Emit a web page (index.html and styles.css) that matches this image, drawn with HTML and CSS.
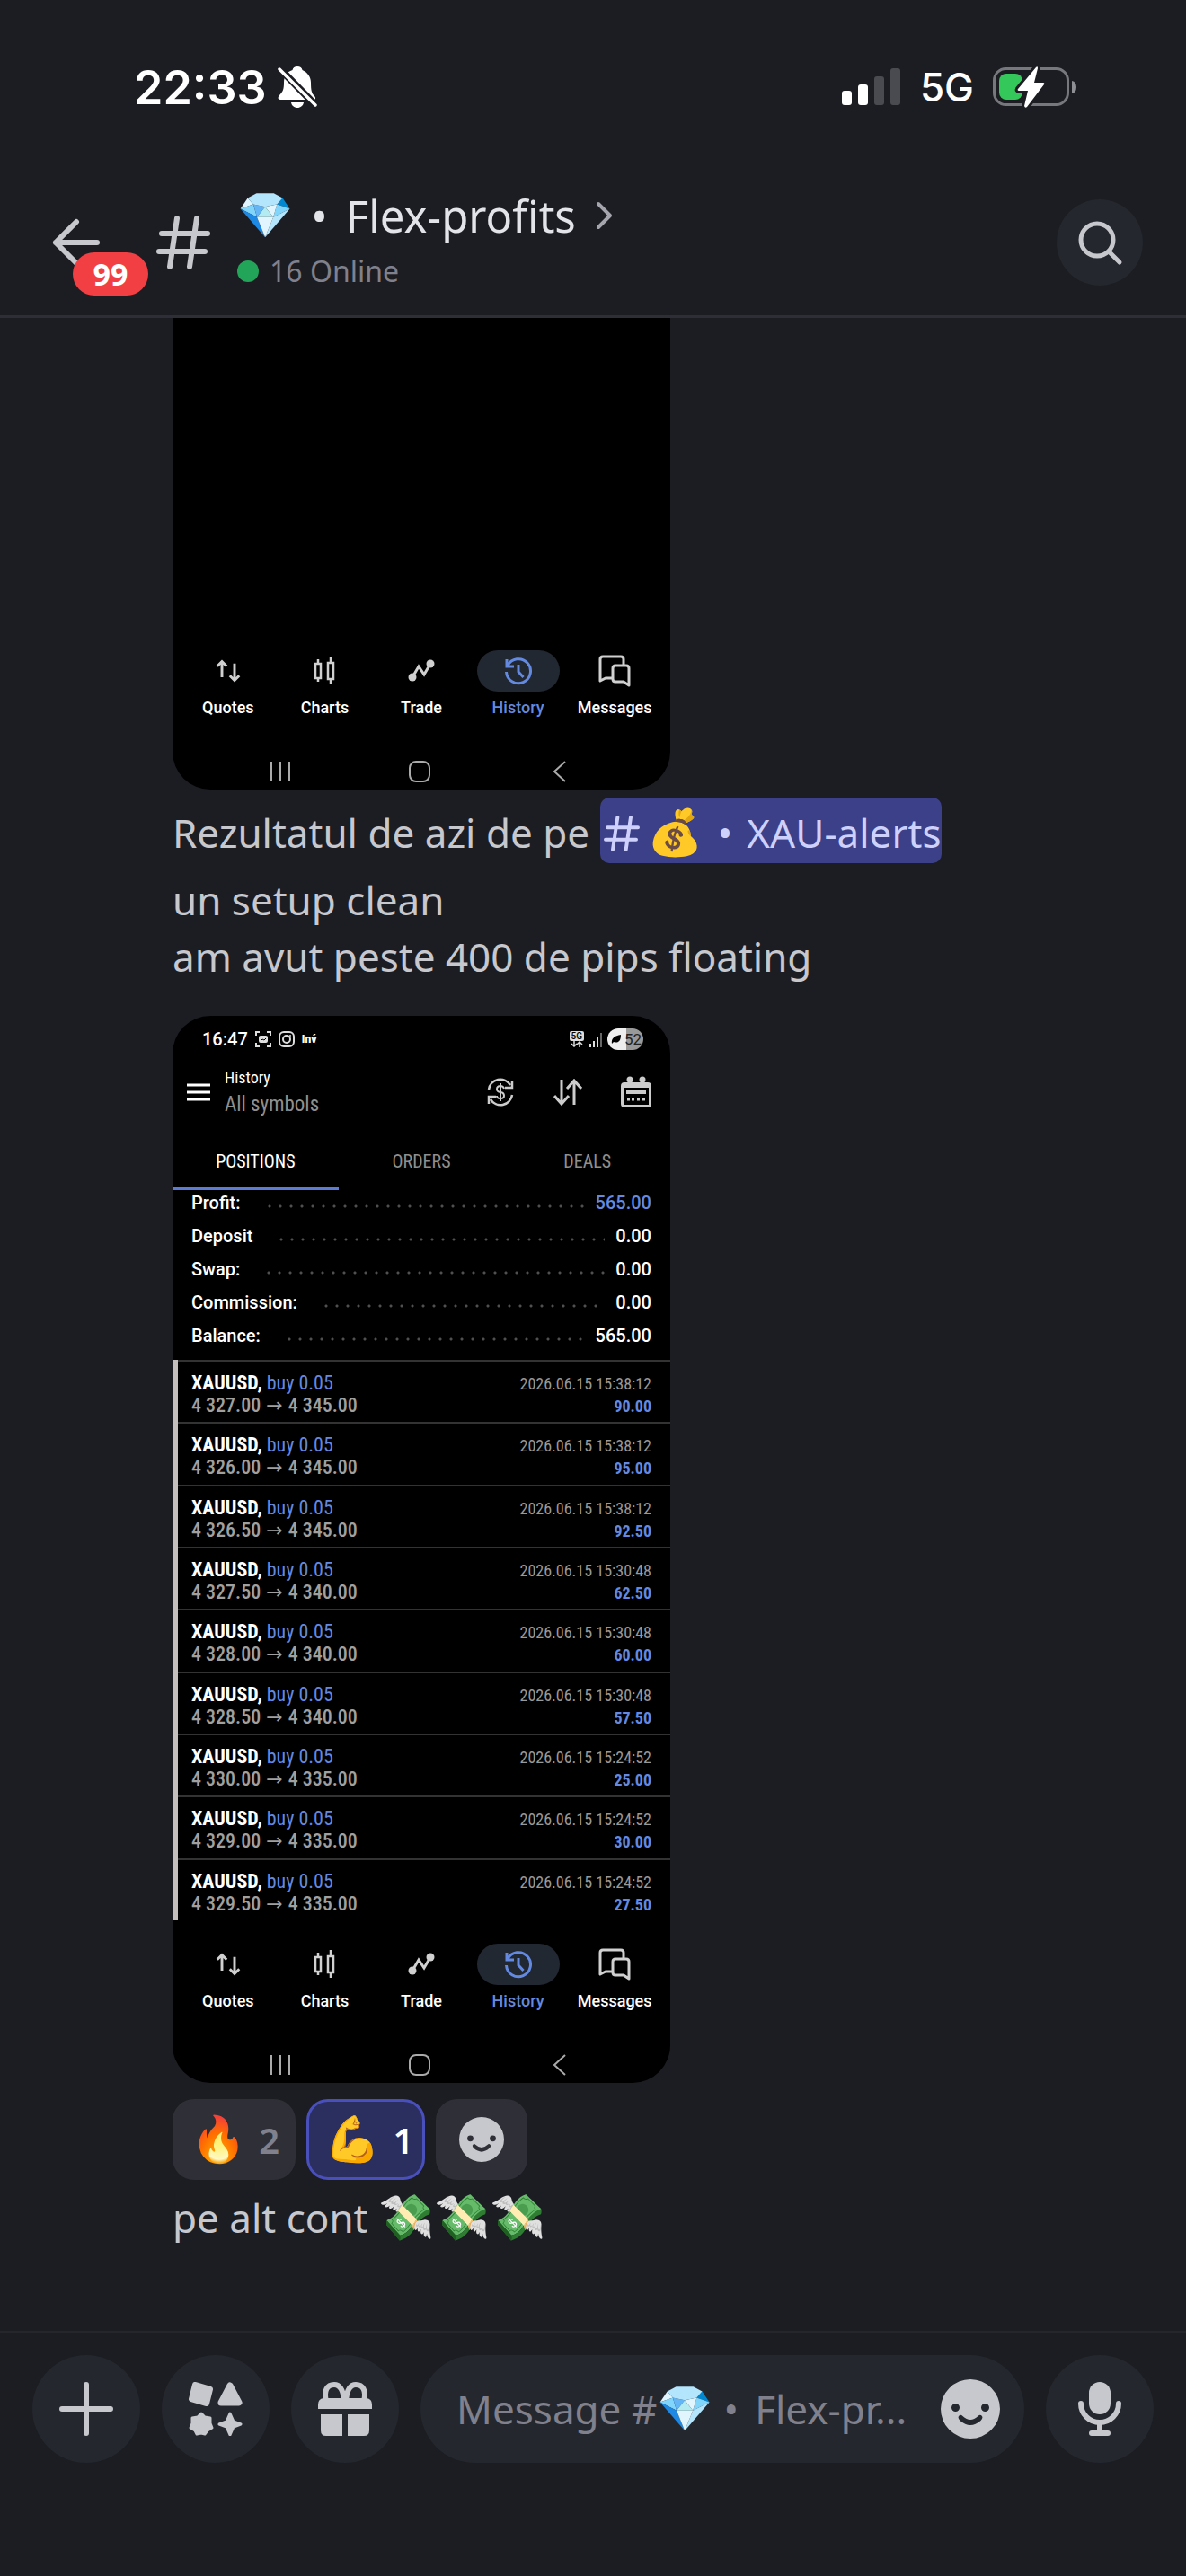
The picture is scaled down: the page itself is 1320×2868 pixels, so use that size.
FILE: index.html
```html
<!DOCTYPE html>
<html lang="ro">

<head>
  <meta charset="UTF-8">
  <meta name="viewport" content="width=device-width, initial-scale=1.0">
  <title>Flex-profits</title>
  <link rel="stylesheet" href="styles.css">
</head>

<body>
  <!-- shared icons -->
  <svg class="sprite" aria-hidden="true">
    <symbol id="i-hash" viewBox="0 0 60 60">
      <path d="M23 3 15 57M45 3 37 57M6 20H57M3 40H54" fill="none" stroke="currentColor" stroke-width="6" stroke-linecap="round" />
    </symbol>
    <symbol id="i-smile" viewBox="0 0 66 66">
      <path fill="currentColor" fill-rule="evenodd" d="M33 0a33 33 0 1 0 0 66a33 33 0 0 0 0-66zM16.500 27a4.500 4.500 0 1 1 0 9a4.500 4.500 0 0 1 0-9zM49.500 27a4.500 4.500 0 1 1 0 9a4.500 4.500 0 0 1 0-9zM19.500 42q2-4 5-1q8.500 8 17 0q3-3 5 1q0 2-2 4q-11.500 10-23 0q-2-2-2-4z" />
    </symbol>
    <symbol id="i-quotes" viewBox="0 0 24 24">
      <path d="M6 18V3M1.500 7.500 6 3l4.500 4.500M18 5v16M13.500 16.500 18 21l4.500-4.500" fill="none" stroke="currentColor" stroke-width="2.500" />
    </symbol>
    <symbol id="i-charts" viewBox="0 0 26 32">
      <path d="M6 3v5M6 24v4M20 0v7M20 25v6M3 8h6v16H3zM17 7h6v18h-6z" fill="none" stroke="currentColor" stroke-width="2.500" />
    </symbol>
    <symbol id="i-trade" viewBox="0 0 30 26">
      <path d="m5 20 7-12 6 9 7-12" fill="none" stroke="currentColor" stroke-width="3" />
      <circle cx="5" cy="20" r="4.500" fill="currentColor" />
      <circle cx="25" cy="5" r="4.500" fill="currentColor" />
    </symbol>
    <symbol id="i-history" viewBox="0 0 32 32">
      <path d="M4 10a13.500 13.500 0 1 1-1.500 7M3 3v8h8M16 9v8l5.500 6" fill="none" stroke="currentColor" stroke-width="3" />
    </symbol>
    <symbol id="i-messages" viewBox="0 0 36 36">
      <path d="M16 26H8l-6 3V5q0-3 3-3h20q3 0 3 3v6M19 12h12q3 0 3 3v19l-6-4h-9q-3 0-3-3V15q0-3 3-3z" fill="none" stroke="currentColor" stroke-width="3" stroke-linejoin="round" />
    </symbol>
  </svg>

  <header class="top">
    <div class="status-bar">
      <div class="status-left">
        <span>22:33</span>
        <svg width="44" height="46" viewBox="0 0 44 46">
          <path fill="#fff" d="M22 0c3 0 5 1.500 5.500 4C34 7 37 12 37 18c0 9 1 12 4 15 2 2 1 4-1 4H3c-3 0-3-3-1-5 4-4 5-7 5-14C7 11 10 6 16.500 4 17 1.500 19 0 22 0zM15 40h14c-.5 3.500-3.500 6-7 6s-6.500-2.500-7-6z" />
          <path d="M3 3 42 43" stroke="#1c1d22" stroke-width="8" />
          <path d="M2 3 42 43" stroke="#fff" stroke-width="3.500" stroke-linecap="round" />
        </svg>
      </div>
      <div class="status-right">
        <svg width="66" height="42" viewBox="0 0 66 42">
          <rect x="0" y="25" width="11" height="16" rx="3" fill="#fff" />
          <rect x="18" y="18" width="11" height="23" rx="3" fill="#fff" />
          <rect x="36" y="9" width="11" height="32" rx="3" fill="#4a4b50" />
          <rect x="54" y="0" width="11" height="41" rx="3" fill="#4a4b50" />
        </svg>
        <span class="network">5G</span>
        <svg width="94" height="46" viewBox="0 0 94 46">
          <rect x="1.500" y="2.500" width="82" height="40" rx="13" fill="none" stroke="#77787d" stroke-width="3" />
          <path d="M88 16q5 1 5 7t-5 7z" fill="#8e8f94" />
          <rect x="7" y="8" width="26" height="29" rx="8" fill="#34c759" />
          <path d="M48 1 28 25q-1 2 1 2h10l-4 17q1 3 3 1l19-25q1-2-1-2H46l4-16q0-3-2-1z" fill="#fff" stroke="#1c1d22" stroke-width="6" paint-order="stroke" />
        </svg>
      </div>
    </div>

    <div class="channel-bar">
      <button class="back" aria-label="Back">
        <svg width="54" height="54" viewBox="0 0 54 54">
          <path d="M27 4 4 27l23 23M4 27h46" fill="none" stroke="#c7c8ce" stroke-width="6" stroke-linecap="round" stroke-linejoin="round" />
        </svg>
        <span class="badge">99</span>
      </button>
      <svg class="channel-hash" width="60" height="60"><use href="#i-hash" /></svg>
      <div class="channel-info">
        <h1>
          <span class="emoji">💎</span><span class="dot">•</span>Flex-profits
          <svg width="20" height="32" viewBox="0 0 20 32">
            <path d="m3 3 13 13L3 29" fill="none" stroke="#a5a6ad" stroke-width="4" stroke-linecap="round" stroke-linejoin="round" />
          </svg>
        </h1>
        <p><span class="online"></span>16 Online</p>
      </div>
      <button class="round search" aria-label="Search">
        <svg width="52" height="52" viewBox="0 0 52 52">
          <circle cx="23" cy="23" r="18" fill="none" stroke="#c7c8ce" stroke-width="5" />
          <path d="m36 36 12 12" stroke="#c7c8ce" stroke-width="5" stroke-linecap="round" />
        </svg>
      </button>
    </div>
  </header>

  <main class="messages">
    <section class="shot shot-tall">
      <nav class="app-nav">
        <a href="#"><span><svg width="28" height="28"><use href="#i-quotes" /></svg></span>Quotes</a>
        <a href="#"><span><svg width="26" height="32"><use href="#i-charts" /></svg></span>Charts</a>
        <a href="#"><span><svg width="30" height="26"><use href="#i-trade" /></svg></span>Trade</a>
        <a href="#" class="active"><span><svg width="32" height="32"><use href="#i-history" /></svg></span>History</a>
        <a href="#"><span><svg width="36" height="36"><use href="#i-messages" /></svg></span>Messages</a>
      </nav>
      <svg class="sys-nav" viewBox="0 0 554 40">
        <path d="M110 9v22M120 9v22M130 9v22M437 9 425 20l12 11" fill="none" stroke="#aaa" stroke-width="2" />
        <rect x="264" y="9" width="22" height="22" rx="7" fill="none" stroke="#aaa" stroke-width="2" />
      </svg>
    </section>

    <p class="message with-mention">Rezultatul de azi de pe <a href="#" class="mention"><svg width="40" height="40"><use href="#i-hash" /></svg><span class="emoji">💰</span><span class="dot">•</span>XAU-alerts</a></p>
    <p class="message">un setup clean<br>am avut peste 400 de pips floating</p>

    <section class="shot shot-history">
      <div class="phone-status">
        <b>16:47</b>
        <svg width="18" height="18" viewBox="0 0 18 18">
          <path d="M1 5V1h4M13 1h4v4M17 13v4h-4M5 17H1v-4" fill="none" stroke="#ddd" stroke-width="2" />
          <rect x="4" y="5" width="10" height="8" rx="2" fill="#ddd" />
          <path d="m6 11 2-2 2 1 2-2" stroke="#000" fill="none" />
        </svg>
        <svg width="18" height="18" viewBox="0 0 18 18">
          <rect x="1" y="1" width="16" height="16" rx="5" fill="none" stroke="#ddd" stroke-width="2" />
          <circle cx="9" cy="9" r="4" fill="none" stroke="#ddd" stroke-width="2" />
          <circle cx="13" cy="5" r="1" fill="#ddd" />
        </svg>
        <b class="inv">Inv́</b>
        <span class="phone-right">
          <span class="five-g"><b>5G</b>
            <svg width="14" height="7" viewBox="0 0 14 7"><path d="M4 0v6M1 3l3 3 3-3M10 7V1M7 4l3-3 3 3" fill="none" stroke="#ddd" stroke-width="1.500" /></svg>
          </span>
          <svg width="14" height="18" viewBox="0 0 14 18">
            <path d="M1 14v4M5 11v7M9 6v12" stroke="#ddd" stroke-width="2" />
            <path d="M13 2v16" stroke="#666" stroke-width="2" />
          </svg>
          <span class="phone-battery">
            <svg width="12" height="12" viewBox="0 0 12 12"><path d="M1 11c-1-6 3-9 10-10 0 7-3 10-8 8z" fill="#000" /></svg>52
          </span>
        </span>
      </div>

      <div class="app-bar">
        <button aria-label="Menu">
          <svg width="26" height="20" viewBox="0 0 26 20"><path d="M0 2h26M0 10h26M0 18h26" stroke="#fff" stroke-width="3" /></svg>
        </button>
        <div class="app-title">
          <h2>History</h2>
          <p>All symbols</p>
        </div>
        <button aria-label="Currency">
          <svg width="32" height="32" viewBox="0 0 32 32">
            <path d="M3 13A13 13 0 0 1 27 8M29 19A13 13 0 0 1 5 24M29 3v8h-8M3 29v-8h8" fill="none" stroke="#ccc" stroke-width="2.500" />
            <path d="M20 12q-1-3-4-3-4 0-4 3.500 0 3 4 3.500t4 4q0 3-4 3t-4-3M16 6v20" fill="none" stroke="#ccc" stroke-width="2" />
          </svg>
        </button>
        <button aria-label="Sort">
          <svg width="32" height="32" viewBox="0 0 32 32"><path d="M9 2v27M1 20l8 9 8-9M23 30V3M15 12l8-9 8 9" fill="none" stroke="#ccc" stroke-width="3" /></svg>
        </button>
        <button aria-label="Calendar">
          <svg width="34" height="36" viewBox="0 0 34 36">
            <circle cx="10" cy="4" r="3.500" fill="#ccc" />
            <circle cx="24" cy="4" r="3.500" fill="#ccc" />
            <path d="M4 7h26q4 0 4 4v20q0 4-4 4H4q-4 0-4-4V11q0-4 4-4zM3 13v19h28V13z" fill="#ccc" fill-rule="evenodd" />
            <path d="M6 18h22" stroke="#ccc" stroke-width="4" />
            <path d="M7 26h3M12 26h3M18 26h3M24 26h3" stroke="#ccc" stroke-width="3" />
          </svg>
        </button>
      </div>

      <div class="tabs">
        <button class="selected">POSITIONS</button>
        <button>ORDERS</button>
        <button>DEALS</button>
      </div>

      <dl class="summary">
        <div><dt>Profit:</dt><dd class="gain">565.00</dd></div>
        <div><dt>Deposit</dt><dd>0.00</dd></div>
        <div><dt>Swap:</dt><dd>0.00</dd></div>
        <div><dt>Commission:</dt><dd>0.00</dd></div>
        <div><dt>Balance:</dt><dd>565.00</dd></div>
      </dl>

      <ul class="deals">
        <li>
          <p><b>XAUUSD,</b><span>buy 0.05</span><time>2026.06.15 15:38:12</time></p>
          <p class="price">4 327.00<i>→</i>4 345.00<em>90.00</em></p>
        </li>
        <li>
          <p><b>XAUUSD,</b><span>buy 0.05</span><time>2026.06.15 15:38:12</time></p>
          <p class="price">4 326.00<i>→</i>4 345.00<em>95.00</em></p>
        </li>
        <li>
          <p><b>XAUUSD,</b><span>buy 0.05</span><time>2026.06.15 15:38:12</time></p>
          <p class="price">4 326.50<i>→</i>4 345.00<em>92.50</em></p>
        </li>
        <li>
          <p><b>XAUUSD,</b><span>buy 0.05</span><time>2026.06.15 15:30:48</time></p>
          <p class="price">4 327.50<i>→</i>4 340.00<em>62.50</em></p>
        </li>
        <li>
          <p><b>XAUUSD,</b><span>buy 0.05</span><time>2026.06.15 15:30:48</time></p>
          <p class="price">4 328.00<i>→</i>4 340.00<em>60.00</em></p>
        </li>
        <li>
          <p><b>XAUUSD,</b><span>buy 0.05</span><time>2026.06.15 15:30:48</time></p>
          <p class="price">4 328.50<i>→</i>4 340.00<em>57.50</em></p>
        </li>
        <li>
          <p><b>XAUUSD,</b><span>buy 0.05</span><time>2026.06.15 15:24:52</time></p>
          <p class="price">4 330.00<i>→</i>4 335.00<em>25.00</em></p>
        </li>
        <li>
          <p><b>XAUUSD,</b><span>buy 0.05</span><time>2026.06.15 15:24:52</time></p>
          <p class="price">4 329.00<i>→</i>4 335.00<em>30.00</em></p>
        </li>
        <li>
          <p><b>XAUUSD,</b><span>buy 0.05</span><time>2026.06.15 15:24:52</time></p>
          <p class="price">4 329.50<i>→</i>4 335.00<em>27.50</em></p>
        </li>
      </ul>

      <nav class="app-nav">
        <a href="#"><span><svg width="28" height="28"><use href="#i-quotes" /></svg></span>Quotes</a>
        <a href="#"><span><svg width="26" height="32"><use href="#i-charts" /></svg></span>Charts</a>
        <a href="#"><span><svg width="30" height="26"><use href="#i-trade" /></svg></span>Trade</a>
        <a href="#" class="active"><span><svg width="32" height="32"><use href="#i-history" /></svg></span>History</a>
        <a href="#"><span><svg width="36" height="36"><use href="#i-messages" /></svg></span>Messages</a>
      </nav>
      <svg class="sys-nav" viewBox="0 0 554 40">
        <path d="M110 9v22M120 9v22M130 9v22M437 9 425 20l12 11" fill="none" stroke="#aaa" stroke-width="2" />
        <rect x="264" y="9" width="22" height="22" rx="7" fill="none" stroke="#aaa" stroke-width="2" />
      </svg>
    </section>

    <div class="reactions">
      <button><span class="emoji">🔥</span>2</button>
      <button class="mine"><span class="emoji">💪</span>1</button>
      <button aria-label="Add reaction"><svg width="50" height="50"><use href="#i-smile" /></svg></button>
    </div>
    <p class="message last">pe alt cont <span class="emoji">💸💸💸</span></p>
  </main>

  <footer class="composer">
    <button class="round" aria-label="Add">
      <svg width="60" height="60" viewBox="0 0 60 60"><path d="M30 3v54M3 30h54" stroke="currentColor" stroke-width="6" stroke-linecap="round" /></svg>
    </button>
    <button class="round" aria-label="Apps">
      <svg width="60" height="60" viewBox="0 0 60 60" fill="currentColor" stroke="currentColor" stroke-linejoin="round">
        <path d="m7 3 17 5-4 16-17-5z" stroke-width="6" />
        <path d="m46 4 10 19H36z" stroke-width="7" />
        <path d="m14 35 4 4 6 1v6l2 5-5 3-3 4-4-1-5 1-2-4-5-3 2-5v-6l6-1z" stroke-width="3" />
        <path d="m46 35 4 9 8 3-8 3-4 9-4-9-8-3 8-3z" stroke-width="3" />
      </svg>
    </button>
    <button class="round" aria-label="Gift">
      <svg width="60" height="60" viewBox="0 0 60 60">
        <path d="M9 21C6 10 10 3 18 3c6 0 10 6 11 18M51 21c3-11-1-18-9-18-6 0-10 6-11 18" fill="none" stroke="currentColor" stroke-width="6" />
        <path d="M6 18h48q6 1 6 7v5H0v-5q0-6 6-7zM3 36h24v24H9q-6 0-6-6zM33 36h24v18q0 6-6 6H33z" fill="currentColor" />
      </svg>
    </button>
    <div class="field">
      <input type="text" id="message" placeholder=" ">
      <label for="message">Message #<span class="emoji">💎</span><span class="dot">•</span>Flex-pr...</label>
      <button aria-label="Emoji"><svg width="66" height="66"><use href="#i-smile" /></svg></button>
    </div>
    <button class="round" aria-label="Voice message">
      <svg width="60" height="60" viewBox="0 0 60 60">
        <rect x="18" y="0" width="24" height="36" rx="12" fill="currentColor" />
        <path d="M9 24a21 21 0 0 0 42 0M30 45v12M21 57h18" fill="none" stroke="currentColor" stroke-width="6" stroke-linecap="round" />
      </svg>
    </button>
  </footer>
</body>

</html>
```
FILE: styles.css
```css
* {
  margin: 0;
  padding: 0;
  box-sizing: border-box;
}

body {
  display: flex;
  flex-direction: column;
  height: 100vh;
  overflow: hidden;
  background-color: #1c1d22;
  color: #c7c8ce;
  font-family: "Noto Sans", sans-serif;
  font-size: 44px;
}

svg {
  display: block;
  flex-shrink: 0;
}

button {
  border: none;
  background: none;
  color: inherit;
  font: inherit;
  cursor: pointer;
}

a {
  color: inherit;
  text-decoration: none;
}

.sprite {
  position: absolute;
  width: 0;
  height: 0;
}

.emoji {
  font-family: "Noto Color Emoji", sans-serif;
  font-size: 50px;
  line-height: 1;
}

/* header */
.top {
  border-bottom: 3px solid #2e2f36;
}

.status-bar {
  display: flex;
  align-items: center;
  justify-content: space-between;
  height: 194px;
  padding: 0 121px 0 149px;
  color: #fff;
  font-family: Inter, sans-serif;
  font-size: 52px;
  font-weight: 600;
}

.status-left,
.status-right {
  display: flex;
  align-items: center;
  gap: 12px;
}

.status-right {
  gap: 21px;
}

.network {
  font-size: 44px;
  font-weight: 500;
}

.channel-bar {
  display: flex;
  align-items: center;
  height: 157px;
  padding: 0 48px 6px 58px;
}

.back {
  position: relative;
}

.badge {
  position: absolute;
  left: 23px;
  top: 38px;
  width: 84px;
  height: 48px;
  border-radius: 24px;
  background-color: #f23f43;
  color: #fff;
  font-size: 34px;
  font-weight: 700;
  line-height: 48px;
}

.channel-hash {
  margin: 0 30px 0 62px;
}

.channel-info {
  flex: 1;
}

.channel-info h1 {
  display: flex;
  align-items: center;
  color: #e3e4e9;
  font-size: 49px;
  font-weight: 400;
  line-height: 60px;
  white-space: nowrap;
}

.channel-info h1 svg {
  margin-left: 22px;
}

.dot {
  margin: 0 20px;
}

.channel-info p {
  display: flex;
  align-items: center;
  gap: 12px;
  margin-top: 4px;
  color: #80818c;
  font-size: 32px;
  line-height: 56px;
}

.online {
  width: 24px;
  height: 24px;
  border-radius: 50%;
  background-color: #23a559;
}

.round {
  display: flex;
  align-items: center;
  justify-content: center;
  flex-shrink: 0;
  width: 120px;
  height: 120px;
  border-radius: 50%;
  background-color: #24272e;
}

.round.search {
  width: 96px;
  height: 96px;
}

/* messages */
.messages {
  display: flex;
  flex: 1;
  flex-direction: column;
  justify-content: flex-end;
  min-height: 0;
  overflow: hidden;
  padding: 0 48px 94px 192px;
}

.message {
  flex-shrink: 0;
  line-height: 63px;
}

.message.last {
  height: 63px;
}

.with-mention {
  display: flex;
  align-items: baseline;
  margin: 9px 0 10px;
  white-space: pre;
}

.mention {
  display: flex;
  align-items: baseline;
  padding: 8px 0 2px 4px;
  border-radius: 10px;
  background-color: #3c4088;
  color: #cdd1fc;
}

.mention svg {
  align-self: center;
}

.mention .emoji {
  margin-left: 9px;
}

.mention .dot {
  margin: 0 16px;
}

/* phone screenshots */
.shot {
  display: flex;
  flex-direction: column;
  flex-shrink: 0;
  width: 554px;
  border-radius: 42px;
  background-color: #000;
  color: #fff;
  font-family: Roboto, sans-serif;
  font-size: 20px;
  overflow: hidden;
}

.shot-tall {
  justify-content: flex-end;
  min-height: 600px;
}

.shot-history {
  margin: 34px 0 18px;
}

.app-nav {
  display: flex;
  padding: 0 8px;
}

.app-nav a {
  display: flex;
  flex: 1;
  flex-direction: column;
  align-items: center;
  font-size: 18px;
  font-weight: 500;
  line-height: 36px;
}

.app-nav span {
  display: flex;
  align-items: center;
  justify-content: center;
  width: 92px;
  height: 46px;
  border-radius: 23px;
  color: #d0d0d0;
}

.app-nav .active,
.app-nav .active span {
  color: #6389e0;
}

.app-nav .active span {
  background-color: #222831;
}

.sys-nav {
  width: 100%;
  height: 40px;
  margin-top: 33px;
}

.phone-status {
  display: flex;
  align-items: center;
  gap: 8px;
  height: 52px;
  padding: 0 30px 0 33px;
}

.phone-status b {
  font-size: 20px;
  font-weight: 500;
}

.phone-status .inv {
  font-size: 12px;
  font-weight: 900;
}

.phone-right {
  display: flex;
  align-items: center;
  gap: 6px;
  margin-left: auto;
}

.five-g {
  display: flex;
  flex-direction: column;
  align-items: center;
}

.phone-status .five-g b {
  padding: 0 2px;
  border-radius: 2px;
  background-color: #ddd;
  color: #000;
  font-size: 10px;
  line-height: 11px;
}

.phone-battery {
  display: flex;
  align-items: center;
  gap: 3px;
  width: 40px;
  height: 24px;
  padding-left: 4px;
  border-radius: 12px;
  background: linear-gradient(90deg, #eee 52%, #999 52%);
  color: #222;
  font-size: 17px;
}

.app-bar {
  display: flex;
  align-items: center;
  gap: 43px;
  height: 66px;
  padding: 0 21px 0 16px;
}

.app-title {
  flex: 1;
  margin-left: -27px;
  font-family: "Roboto Condensed", Roboto, sans-serif;
}

.app-title h2 {
  font-size: 18px;
  font-weight: 400;
  line-height: 28px;
}

.app-title p {
  color: #8f8f8f;
  font-size: 23px;
  line-height: 32px;
}

.tabs {
  display: flex;
  margin-top: 16px;
}

.tabs button {
  flex: 1;
  height: 60px;
  border-bottom: 4px solid transparent;
  color: #8f8f8f;
  font-family: "Roboto Condensed", Roboto, sans-serif;
  font-size: 20px;
}

.tabs .selected {
  border-color: #5b7bd5;
  color: #fff;
}

/* the list is scrolled a little way under the tabs */
.summary {
  margin-top: -5px;
  padding: 0 21px 9px;
  font-weight: 500;
}

.summary div {
  display: flex;
  align-items: center;
  height: 37px;
}

/* dotted leader between the name and the value */
.summary div::before {
  content: "";
  flex: 1;
  order: 1;
  height: 4px;
  margin: 8px 12px 0 26px;
  background: radial-gradient(circle, #505050 1px, transparent 2px) 0 0 / 12px 4px repeat-x;
}

.summary dd {
  order: 2;
}

.gain {
  color: #6389e0;
}

.deals {
  display: flex;
  flex-direction: column;
  height: 624px;
  border-left: 6px solid #c4bfbc;
  font-family: "Roboto Condensed", Roboto, sans-serif;
  font-size: 22px;
  line-height: 25px;
  list-style: none;
}

.deals li {
  flex: 1;
  padding: 11px 21px 0 15px;
  border-top: 2px solid #333;
}

.deals p {
  display: flex;
  align-items: baseline;
  height: 25px;
}

.deals span {
  margin-left: 5px;
  color: #6389e0;
}

.deals i {
  margin: 0 6px;
  font-family: "DejaVu Sans", sans-serif;
  font-style: normal;
}

.deals time {
  margin-left: auto;
  color: #999;
  font-size: 18px;
}

.deals .price {
  color: #a0a0a0;
  font-weight: 500;
}

.deals em {
  margin-left: auto;
  color: #6389e0;
  font-size: 18px;
  font-style: normal;
  font-weight: 700;
}

.deals + .app-nav {
  margin-top: 26px;
}

/* reactions */
.reactions {
  display: flex;
  flex-shrink: 0;
  gap: 12px;
  margin-bottom: 11px;
}

.reactions button {
  display: flex;
  align-items: center;
  gap: 14px;
  height: 90px;
  padding: 0 15px 0 17px;
  border: 3px solid #2f3037;
  border-radius: 24px;
  background-color: #2f3037;
  color: #80818c;
  font-size: 40px;
  font-weight: 600;
}

.reactions button:last-child {
  padding: 0 23px;
  color: #c7c8ce;
}

.reactions .mine {
  padding-right: 10px;
  border-color: #4a50bb;
  background-color: #2b2f5f;
  color: #fff;
}

/* composer */
.composer {
  display: flex;
  gap: 24px;
  padding: 24px 36px 126px;
  border-top: 3px solid #24262c;
}

.field {
  position: relative;
  display: flex;
  flex: 1;
  align-items: center;
  gap: 30px;
  min-width: 0;
  height: 120px;
  padding: 0 27px 0 40px;
  border-radius: 60px;
  background-color: #24272e;
}

.field input {
  flex: 1;
  min-width: 0;
  height: 100%;
  border: none;
  outline: none;
  background: none;
  color: #e3e4e9;
  font: inherit;
}

/* hint lies over the empty input */
.field label {
  position: absolute;
  left: 40px;
  display: flex;
  align-items: center;
  color: #80818c;
  white-space: nowrap;
  cursor: text;
}

.field .dot {
  margin: 0 18px 0 12px;
}

.field input:not(:placeholder-shown) + label {
  display: none;
}
```
